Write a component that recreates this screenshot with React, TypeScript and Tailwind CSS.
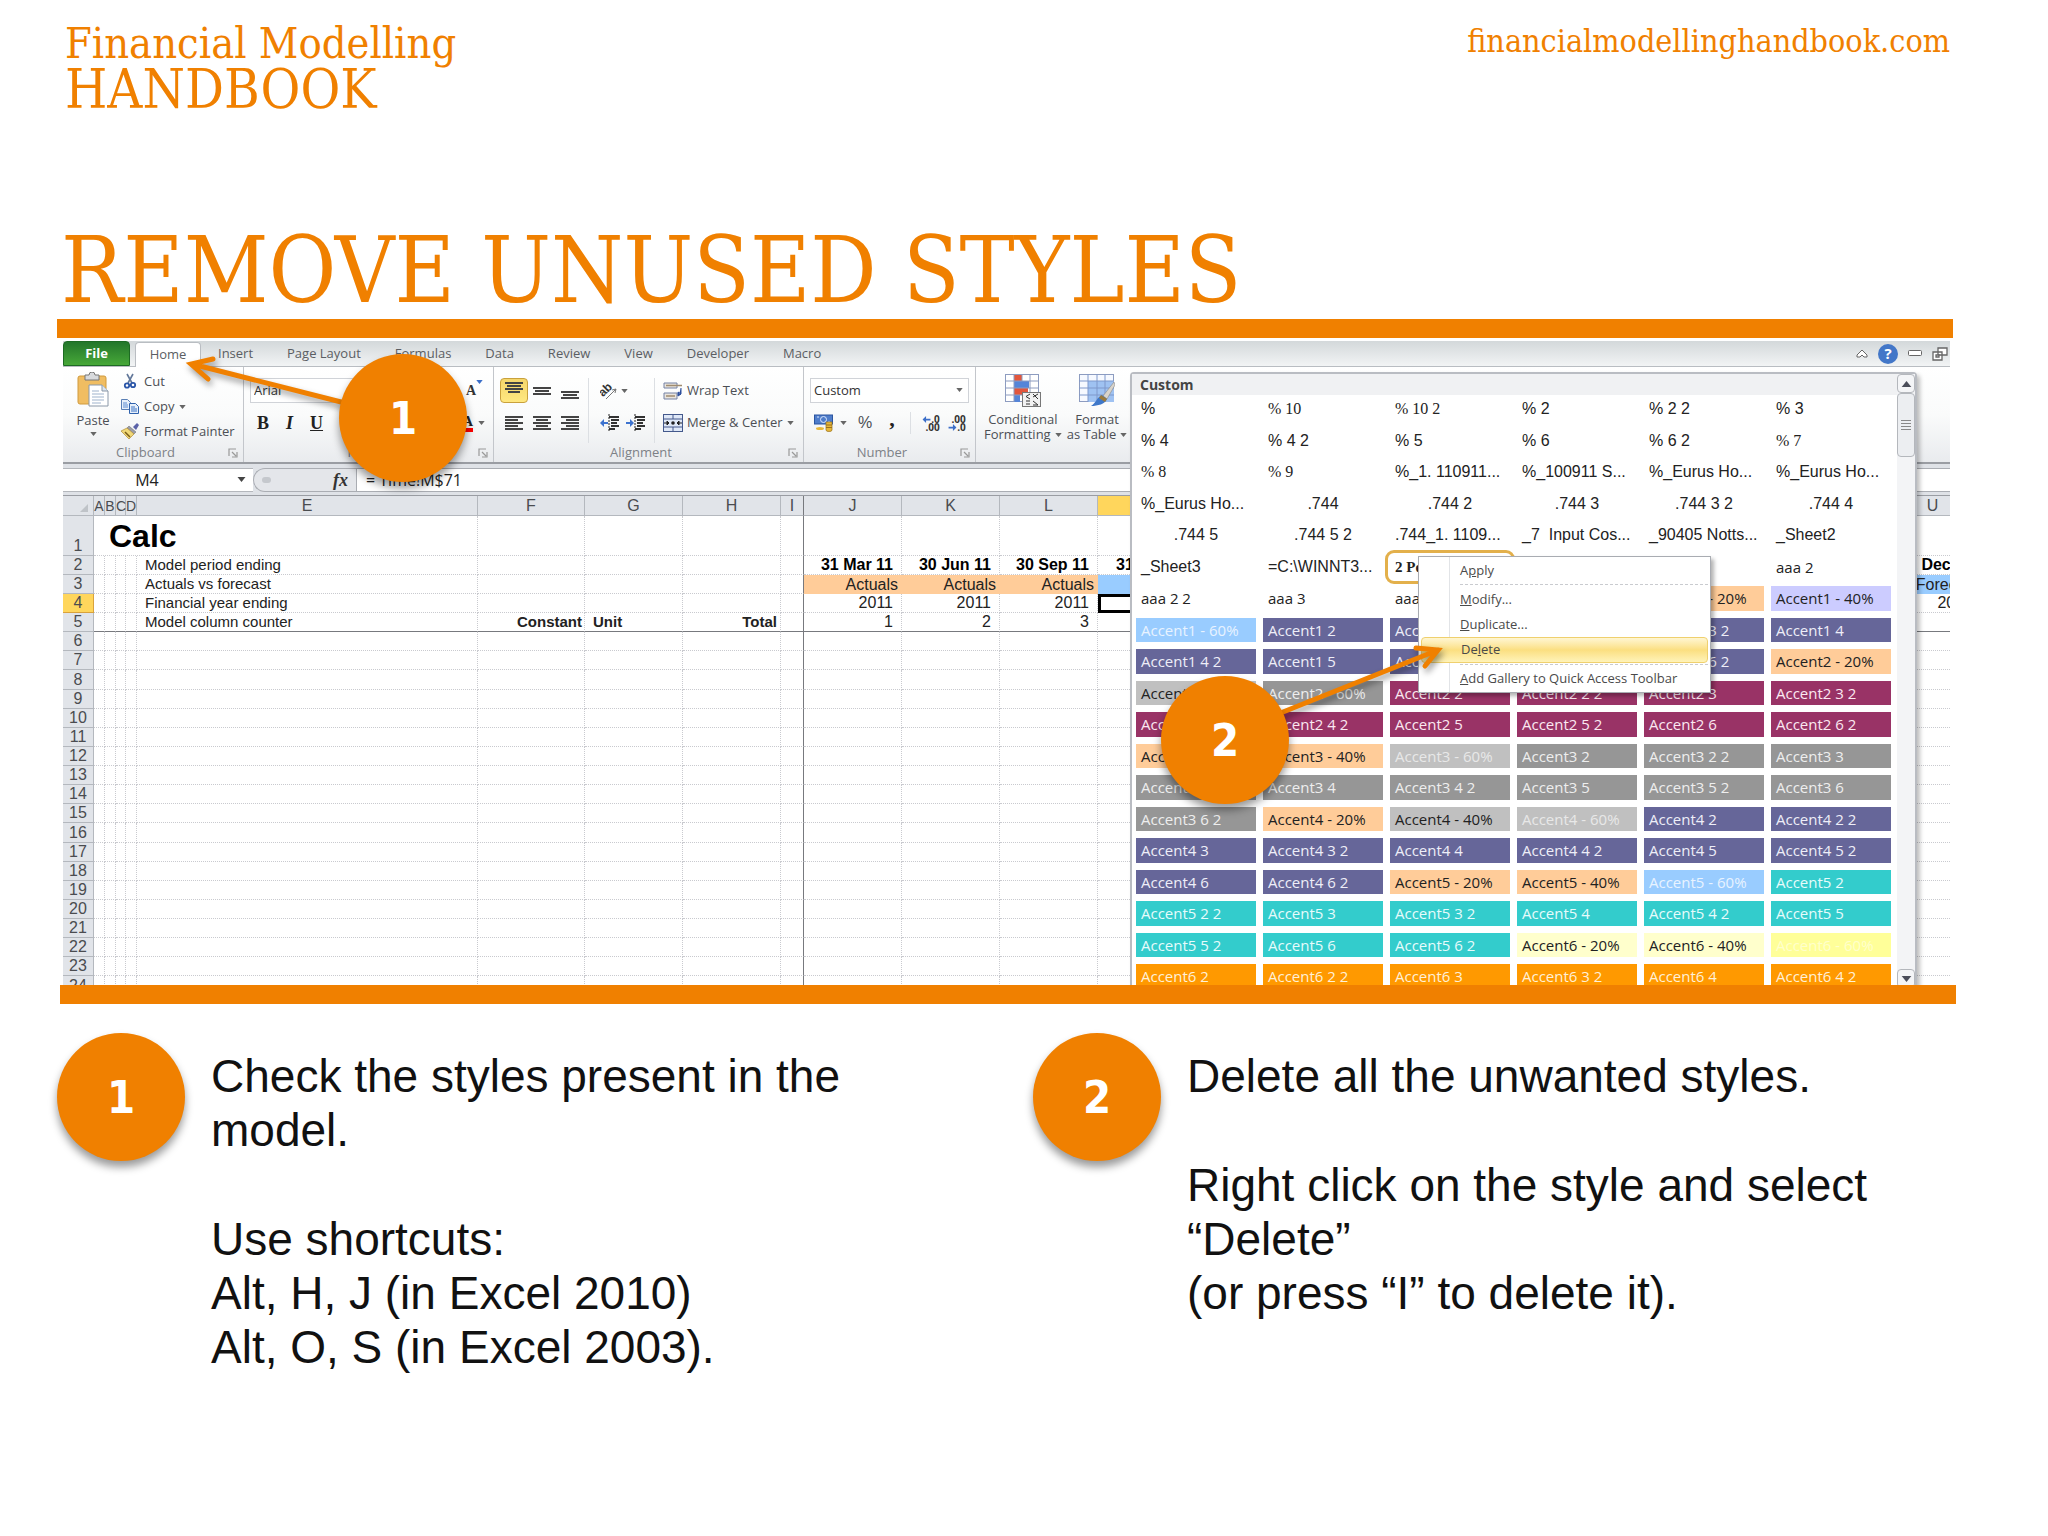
import type { ReactNode } from "react"
import clsx from "clsx"

const tabs = ["Insert", "Page Layout", "Formulas", "Data", "Review", "View", "Developer", "Macro"]

const quarterColumns = ["J", "K", "L", "M", "N", "O", "P", "Q", "R", "S", "T", "U"]

const periods: Record<string, { date: string; year?: string; counter?: string }> = {
  J: { date: "31 Mar 11", year: "2011", counter: "1" },
  K: { date: "30 Jun 11", year: "2011", counter: "2" },
  L: { date: "30 Sep 11", year: "2011", counter: "3" },
  M: { date: "31 Dec 11" },
  U: { date: "31 Dec 13", year: "2013" },
}

const rowLabels: Record<number, string> = {
  2: "Model period ending",
  3: "Actuals vs forecast",
  4: "Financial year ending",
  5: "Model column counter",
}

const tones = {
  sans: "font-['Liberation_Sans',Arial,sans-serif] text-[16px] text-[#222]",
  center: "font-['Liberation_Sans',Arial,sans-serif] text-[16px] text-[#222] justify-center",
  serif: "font-['Liberation_Serif',serif] text-[16px] text-[#222]",
  plain: "text-[#222]",
  picked: "font-['Liberation_Serif',serif] font-bold text-[#222] outline-3 outline-offset-2 outline-[#e3b04b] rounded-sm",
  sky: "bg-[#99ccff] text-[#e8f3ff]",
  indigo: "bg-[#666699] text-[#eeeef8]",
  lilac: "bg-[#ccccff] text-[#222]",
  peach: "bg-[#ffcc99] text-[#222]",
  silver: "bg-[#c0c0c0] text-[#222]",
  silverLight: "bg-[#c0c0c0] text-[#e8e8e8]",
  gray: "bg-[#969696] text-[#eee]",
  plum: "bg-[#993366] text-[#fbe8f1]",
  teal: "bg-[#33cccc] text-[#e6fbfb]",
  cream: "bg-[#ffffcc] text-[#222]",
  yellow: "bg-[#ffff99] text-[#ffffcc]",
  orange: "bg-[#ff9900] text-[#fff0d8]",
}

type Tone = keyof typeof tones

const gallery: [string, Tone][] = [
  ["%", "sans"], ["% 10", "serif"], ["% 10 2", "serif"], ["% 2", "sans"], ["% 2 2", "sans"], ["% 3", "sans"],
  ["% 4", "sans"], ["% 4 2", "sans"], ["% 5", "sans"], ["% 6", "sans"], ["% 6 2", "sans"], ["% 7", "serif"],
  ["% 8", "serif"], ["% 9", "serif"], ["%_1. 110911...", "sans"], ["%_100911 S...", "sans"], ["%_Eurus Ho...", "sans"], ["%_Eurus Ho...", "sans"],
  ["%_Eurus Ho...", "sans"], [".744", "center"], [".744 2", "center"], [".744 3", "center"], [".744 3 2", "center"], [".744 4", "center"],
  [".744 5", "center"], [".744 5 2", "center"], [".744_1. 1109...", "sans"], ["_7  Input Cos...", "sans"], ["_90405 Notts...", "sans"], ["_Sheet2", "sans"],
  ["_Sheet3", "sans"], ["=C:\\WINNT3...", "sans"], ["2 Pe", "picked"], ["", "plain"], ["", "plain"], ["aaa 2", "plain"],
  ["aaa 2 2", "plain"], ["aaa 3", "plain"], ["aaa", "plain"], ["", "plain"], ["Accent1 - 20%", "peach"], ["Accent1 - 40%", "lilac"],
  ["Accent1 - 60%", "sky"], ["Accent1 2", "indigo"], ["Accent1 2 2", "indigo"], ["Accent1 3", "indigo"], ["Accent1 3 2", "indigo"], ["Accent1 4", "indigo"],
  ["Accent1 4 2", "indigo"], ["Accent1 5", "indigo"], ["Accent1 5 2", "indigo"], ["Accent1 6", "indigo"], ["Accent1 6 2", "indigo"], ["Accent2 - 20%", "peach"],
  ["Accent2 - 40%", "silver"], ["Accent2 - 60%", "gray"], ["Accent2 2", "plum"], ["Accent2 2 2", "plum"], ["Accent2 3", "plum"], ["Accent2 3 2", "plum"],
  ["Accent2 4", "plum"], ["Accent2 4 2", "plum"], ["Accent2 5", "plum"], ["Accent2 5 2", "plum"], ["Accent2 6", "plum"], ["Accent2 6 2", "plum"],
  ["Accent3 - 20%", "peach"], ["Accent3 - 40%", "peach"], ["Accent3 - 60%", "silverLight"], ["Accent3 2", "gray"], ["Accent3 2 2", "gray"], ["Accent3 3", "gray"],
  ["Accent3 3 2", "gray"], ["Accent3 4", "gray"], ["Accent3 4 2", "gray"], ["Accent3 5", "gray"], ["Accent3 5 2", "gray"], ["Accent3 6", "gray"],
  ["Accent3 6 2", "gray"], ["Accent4 - 20%", "peach"], ["Accent4 - 40%", "silver"], ["Accent4 - 60%", "silverLight"], ["Accent4 2", "indigo"], ["Accent4 2 2", "indigo"],
  ["Accent4 3", "indigo"], ["Accent4 3 2", "indigo"], ["Accent4 4", "indigo"], ["Accent4 4 2", "indigo"], ["Accent4 5", "indigo"], ["Accent4 5 2", "indigo"],
  ["Accent4 6", "indigo"], ["Accent4 6 2", "indigo"], ["Accent5 - 20%", "peach"], ["Accent5 - 40%", "peach"], ["Accent5 - 60%", "sky"], ["Accent5 2", "teal"],
  ["Accent5 2 2", "teal"], ["Accent5 3", "teal"], ["Accent5 3 2", "teal"], ["Accent5 4", "teal"], ["Accent5 4 2", "teal"], ["Accent5 5", "teal"],
  ["Accent5 5 2", "teal"], ["Accent5 6", "teal"], ["Accent5 6 2", "teal"], ["Accent6 - 20%", "cream"], ["Accent6 - 40%", "cream"], ["Accent6 - 60%", "yellow"],
  ["Accent6 2", "orange"], ["Accent6 2 2", "orange"], ["Accent6 3", "orange"], ["Accent6 3 2", "orange"], ["Accent6 4", "orange"], ["Accent6 4 2", "orange"],
]

function Badge({ children, className }: { children: ReactNode; className?: string }) {
  return (
    <div
      className={clsx(
        "flex size-32 shrink-0 items-center justify-center rounded-full bg-[#f08000] font-['DejaVu_Sans_Condensed','DejaVu_Sans',sans-serif] text-[45px] leading-none font-bold text-white shadow-[0_6px_8px_rgba(0,0,0,0.4)]",
        className,
      )}
    >
      {children}
    </div>
  )
}

function Caret({ className = "h-[4px] w-[7px] fill-[#666]" }: { className?: string }) {
  return (
    <svg viewBox="0 0 8 5" className={clsx("shrink-0", className)}>
      <path d="M0 0h8L4 5z" />
    </svg>
  )
}

/* Stack of ruled lines; each entry is [x, width] */
function Lines({ rows, top = 2 }: { rows: [number, number][]; top?: number }) {
  return (
    <svg viewBox="0 0 18 18" className="size-[18px] shrink-0">
      {rows.map(([x, w], i) => (
        <rect key={i} x={x} y={top + i * 3} width={w} height="2" fill="#444" />
      ))}
    </svg>
  )
}

function Launcher() {
  return (
    <svg viewBox="0 0 10 10" className="size-[10px] fill-none stroke-[#999]">
      <path d="M1 8V1h7M4 4l4 4M9 4v5H4" strokeWidth="1.2" />
    </svg>
  )
}

function Group({ label, className, children }: { label: string; className?: string; children: ReactNode }) {
  return (
    <section className={clsx("flex shrink-0 flex-col border-r border-[#c3c6cb]", className)}>
      <div className="min-h-0 flex-1">{children}</div>
      <footer className="flex h-[18px] items-center pr-[5px] text-[#7d8187]">
        <span className="flex-1 text-center">{label}</span>
        <Launcher />
      </footer>
    </section>
  )
}

function PasteIcon() {
  return (
    <svg viewBox="0 0 32 36" className="h-[36px] w-[32px]">
      <rect x="1" y="4" width="28" height="28" rx="2" fill="#f0bd62" stroke="#d09a3c" />
      <path d="M8 3h4a3 3 0 0 1 6 0h4v5H8z" fill="#d8dadd" stroke="#777" />
      <path d="M12 13h13l6 6v15H12z" fill="#fff" stroke="#8b98a8" />
      <path d="M25 13v6h6" fill="#dde6f0" stroke="#8b98a8" />
      <path d="M15 19h7M15 22h12M15 25h12M15 28h12M15 31h9" stroke="#9fb3cc" />
    </svg>
  )
}

function CutIcon() {
  return (
    <svg viewBox="0 0 18 16" className="h-[16px] w-[18px]" fill="none">
      <path d="M6 1l5 9M12 1L7 10" stroke="#63789a" strokeWidth="1.6" />
      <circle cx="6" cy="12.5" r="2.2" stroke="#2a55a8" strokeWidth="1.8" />
      <circle cx="12" cy="12" r="2.2" stroke="#2a55a8" strokeWidth="1.8" />
    </svg>
  )
}

function CopyIcon() {
  return (
    <svg viewBox="0 0 18 16" className="h-[16px] w-[18px]">
      <path d="M.5 1.5h6l3 3v7h-9z" fill="#e6effa" stroke="#5a7fb5" />
      <path d="M2 5h4M2 7h5M2 9h5" stroke="#5a8ad0" />
      <path d="M8.5 5.5h6l3 3v7h-9z" fill="#e6effa" stroke="#2f62ad" />
      <path d="M10 9h4M10 11h6M10 13h6" stroke="#3b73c4" />
    </svg>
  )
}

function PainterIcon() {
  return (
    <svg viewBox="0 0 18 16" className="h-[16px] w-[18px]">
      <path d="M12 4l4-4 2 2-3 5z" fill="#5b62a8" />
      <path d="M8 3l7 6-2 2-7-6z" fill="#9a9ca8" stroke="#666" strokeWidth=".5" />
      <path d="M6 5l7 6-5 5-8-8z" fill="#f0d878" stroke="#b08a35" strokeWidth=".7" />
      <path d="M4 9l5 5" stroke="#7a5c18" strokeWidth="1.5" />
    </svg>
  )
}

function OrientationIcon() {
  return (
    <svg viewBox="0 0 18 18" className="size-[18px]">
      <g transform="rotate(-45 8 9)">
        <text x="0" y="10" fontSize="12" fontWeight="bold" fontFamily="Liberation Sans" fill="#333">ab</text>
      </g>
      <path d="M6 17L16 7M16 7l-4 1M16 7l-1 4" stroke="#777" fill="none" />
    </svg>
  )
}

function IndentIcon() {
  return (
    <svg viewBox="0 0 20 18" className="h-[18px] w-[20px]">
      <path d="M9 3h10M11 6h8M11 9h6M11 12h8M9 15h6" stroke="#333" strokeWidth="2" />
      <path d="M9 0v18" stroke="#222" strokeDasharray="2 1" />
      <path d="M0 9l4-4v3h4v2H4v3z" fill="#3d73cf" />
    </svg>
  )
}

function OutdentIcon() {
  return (
    <svg viewBox="0 0 20 18" className="h-[18px] w-[20px]">
      <path d="M9 3h10M11 6h8M11 9h6M11 12h8M9 15h6" stroke="#333" strokeWidth="2" />
      <path d="M9 0v18" stroke="#222" strokeDasharray="2 1" />
      <path d="M8 9L4 5v3H0v2h4v3z" fill="#3d73cf" />
    </svg>
  )
}

function WrapIcon() {
  return (
    <svg viewBox="0 0 20 18" className="h-[18px] w-[20px]">
      <path d="M1 1h13v5H1zM1 11h13v6H1z" fill="#e9e4dc" stroke="#7582a5" />
      <path d="M3 3.5h16M3 14h9" stroke="#a08c70" strokeWidth="1.5" />
      <path d="M18 6v6h-2M18 12l-3-2v4z" stroke="#2d4f9c" fill="#2d4f9c" />
    </svg>
  )
}

function MergeIcon() {
  return (
    <svg viewBox="0 0 20 18" className="h-[18px] w-[20px]">
      <rect x=".5" y=".5" width="19" height="17" fill="#dfe8f7" stroke="#44598c" />
      <path d="M0 5h20M0 13h20M10 0v5M10 13v5" stroke="#44598c" />
      <path d="M1 9h5M19 9h-5M4 7v4l2-2zM16 7v4l-2-2z" stroke="#222" fill="#222" />
      <circle cx="10" cy="9" r="1.8" fill="#222" />
    </svg>
  )
}

function CurrencyIcon() {
  return (
    <svg viewBox="0 0 20 18" className="h-[18px] w-[20px]">
      <rect x=".5" y="1" width="18" height="9" fill="#4f7dca" stroke="#2b559f" />
      <circle cx="9.5" cy="5.5" r="3" fill="none" stroke="#dbe8ff" />
      <path d="M3 3h2M14 8h2" stroke="#dbe8ff" />
      <path d="M12 8h6v8a3 1.5 0 0 1-6 0z" fill="#e8b83a" stroke="#9a701a" strokeWidth=".7" />
      <path d="M12 11h6M12 13.5h6" stroke="#9a701a" />
      <ellipse cx="6" cy="14.5" rx="4" ry="1.5" fill="#e8b83a" />
    </svg>
  )
}

function DecimalIcon({ more }: { more?: boolean }) {
  return (
    <span className="flex w-[20px] flex-col items-end text-[10px] leading-[8px] font-bold text-[#333]">
      <span className="flex items-center">
        {more && <svg viewBox="0 0 9 8" className="h-[7px] w-[9px] fill-[#3c6fc9]"><path d="M0 4l4-4v3h5v2H4v3z" /></svg>}
        {more ? ".0" : ".00"}
      </span>
      <span className="flex items-center">
        {!more && <svg viewBox="0 0 9 8" className="h-[7px] w-[9px] fill-[#3c6fc9]"><path d="M9 4L5 0v3H0v2h5v3z" /></svg>}
        {more ? ".00" : ".0"}
      </span>
    </span>
  )
}

function ConditionalIcon() {
  return (
    <svg viewBox="0 0 36 33" className="h-[33px] w-[36px]">
      <rect x=".5" y=".5" width="33" height="27" fill="#fff" stroke="#8d9cc0" />
      <path d="M9 1h8v6H9zM9 14h14v7H9z" fill="#e2563c" />
      <path d="M9 7h15v7H9zM9 21h6v7H9z" fill="#5585d8" />
      <path d="M0 7h34M0 14h34M0 21h34M9 0v28M17 0v7M25 0v28" stroke="#8d9cc0" />
      <rect x="17.5" y="18.5" width="18" height="14" fill="#f2f2f2" stroke="#777" />
      <path d="M25 20l-4 2.500 4 2.500M21 27h4M21 30h4M28 20l5 5M33 20l-5 3M28 27l5 4M28 31h5" stroke="#333" fill="none" />
    </svg>
  )
}

function TableIcon() {
  return (
    <svg viewBox="0 0 36 33" className="h-[33px] w-[36px]">
      <rect x=".5" y=".5" width="34" height="27" fill="#f6f9ff" stroke="#8d9cc0" />
      <path d="M9 7h26v21H9z" fill="#9fc2f2" />
      <path d="M0 7h35M0 14h35M0 21h35M9 0v28M18 0v28M26 0v28" stroke="#7e98cb" />
      <path d="M35 8L24 22l4 3 8-14z" fill="#d9d4cb" stroke="#888" strokeWidth=".6" />
      <path d="M23 21l5 4c-2 5-9 7-16 7 5-3 6-9 11-11z" fill="#3f78c9" />
      <path d="M22 21l6 4-2 3-6-4z" fill="#9b7a3a" />
    </svg>
  )
}

function TabRow() {
  return (
    <nav className="flex h-[26px] items-end border-b border-[#b9bdc2] bg-linear-to-b from-[#d3d8da] to-[#f2f4f5] text-[#5b5e63]">
      <button className="h-full w-[67px] rounded-t-sm border border-[#1d6b23] bg-linear-to-b from-[#23762b] to-[#47a838] font-bold text-white">File</button>
      <button className="-mb-px ml-[5px] h-full w-[66px] rounded-t-sm border border-b-0 border-[#b9bdc2] bg-white">Home</button>
      <div className="flex h-full items-center">
        {tabs.map((tab) => (
          <button key={tab} className="px-[17px]">{tab}</button>
        ))}
      </div>
      <div className="ml-auto flex h-full items-center gap-[10px] pr-[2px]">
        <svg viewBox="0 0 12 10" className="h-[10px] w-[12px]" fill="#fff" stroke="#666">
          <path d="M1 6l5-5 5 5v2H8L6 6 4 8H1z" />
        </svg>
        <span className="flex size-[20px] items-center justify-center rounded-full bg-[#4377c8] text-[15px] font-bold text-white">?</span>
        <svg viewBox="0 0 14 7" className="h-[7px] w-[14px]" fill="#fff" stroke="#666">
          <rect x=".5" y=".5" width="13" height="5" rx="1" />
        </svg>
        <svg viewBox="0 0 16 14" className="h-[14px] w-[16px]" fill="#fff" stroke="#666" strokeWidth="1.3">
          <path d="M6 1h9v7H6zM1 5h9v8H1z" />
          <path d="M4 8h3v2H4z" />
        </svg>
      </div>
    </nav>
  )
}

function Ribbon() {
  return (
    <div className="flex h-[97px] border-b-2 border-[#9a9da3] bg-linear-to-b from-white via-[#fafbfb] to-[#e9ebee] text-[#4c4f55]">
      <Group label="Clipboard" className="w-[181px]">
        <div className="flex pt-[5px] pl-[12px]">
          <button className="flex w-[36px] flex-col items-center">
            <PasteIcon />
            <span className="leading-[24px]">Paste</span>
            <Caret />
          </button>
          <div className="flex flex-col pl-[10px]">
            {[
              { icon: <CutIcon />, label: "Cut" },
              { icon: <CopyIcon />, label: "Copy", caret: true },
              { icon: <PainterIcon />, label: "Format Painter" },
            ].map((item) => (
              <button key={item.label} className="flex h-[25px] items-start gap-[5px] whitespace-nowrap">
                <span className="pt-px">{item.icon}</span>
                {item.label}
                {item.caret && <Caret className="mt-[8px] h-[4px] w-[7px] fill-[#666]" />}
              </button>
            ))}
          </div>
        </div>
      </Group>

      <Group label="Font" className="w-[250px]">
        <div className="flex items-center pt-[11px] pl-[6px]">
          <select aria-label="Font" className="h-[25px] w-[160px] appearance-none border border-[#d0d3d8] bg-white px-[3px] text-[#333]">
            <option>Arial</option>
          </select>
          <button className="ml-auto flex items-start pr-[10px] font-['Liberation_Serif',serif] text-[14px] font-bold text-[#333]">
            A<Caret className="h-[4px] w-[7px] fill-[#3c6fc9]" />
          </button>
        </div>
        <div className="flex h-[40px] items-center gap-[17px] pl-[13px] font-['Liberation_Serif',serif] text-[18px] text-[#222]">
          <button className="font-bold">B</button>
          <button className="font-bold italic">I</button>
          <button className="font-bold underline">U</button>
          <Caret />
          <button className="ml-auto flex items-center gap-[5px] pr-[8px]">
            <span className="border-b-4 border-[#f00] text-[15px] leading-[14px] font-bold">A</span>
            <Caret />
          </button>
        </div>
      </Group>

      <Group label="Alignment" className="w-[310px]">
        <div className="flex pt-[11px] pl-[6px]">
          <div className="flex flex-col">
            <div className="flex h-[25px] items-center">
              <button aria-label="Top align" className="flex h-[25px] w-[28px] justify-center rounded-sm border border-[#c9a13c] bg-linear-to-b from-[#f5d66b] to-[#ffe880]">
                <Lines rows={[[0, 18], [2, 14], [0, 18], [3, 12]]} top={3} />
              </button>
              <button aria-label="Middle align" className="flex w-[28px] justify-center"><Lines rows={[[0, 18], [2, 14], [0, 18]]} top={5} /></button>
              <button aria-label="Bottom align" className="flex w-[28px] justify-center"><Lines rows={[[0, 18], [2, 14], [0, 18]]} top={9} /></button>
            </div>
            <div className="flex h-[40px] items-center">
              <button aria-label="Align left" className="flex w-[28px] justify-center"><Lines rows={[[0, 18], [0, 13], [0, 18], [0, 13], [0, 18]]} /></button>
              <button aria-label="Center" className="flex w-[28px] justify-center"><Lines rows={[[0, 18], [3, 12], [0, 18], [3, 12], [0, 18]]} /></button>
              <button aria-label="Align right" className="flex w-[28px] justify-center"><Lines rows={[[0, 18], [5, 13], [0, 18], [5, 13], [0, 18]]} /></button>
            </div>
          </div>
          <div className="ml-[4px] flex flex-col border-l border-[#dcdfe3] pl-[11px]">
            <button aria-label="Orientation" className="flex h-[25px] items-center gap-[3px]"><OrientationIcon /><Caret /></button>
            <div className="flex h-[40px] items-center gap-[6px]">
              <IndentIcon />
              <OutdentIcon />
            </div>
          </div>
          <div className="ml-[8px] flex flex-col border-l border-[#dcdfe3] pl-[8px]">
            <button className="flex h-[25px] items-center gap-[4px]"><WrapIcon />Wrap Text</button>
            <button className="flex h-[40px] items-center gap-[4px] whitespace-nowrap"><MergeIcon />Merge &amp; Center<Caret /></button>
          </div>
        </div>
      </Group>

      <Group label="Number" className="w-[172px]">
        <div className="flex items-center px-[6px] pt-[11px]">
          <div className="relative flex-1">
            <select aria-label="Number format" className="h-[25px] w-full appearance-none border border-[#d0d3d8] bg-white px-[3px] text-[#333]">
              <option>Custom</option>
            </select>
            <Caret className="absolute top-[10px] right-[6px] h-[4px] w-[7px] fill-[#666]" />
          </div>
        </div>
        <div className="flex h-[40px] items-center pl-[10px]">
          <CurrencyIcon />
          <Caret className="ml-[6px] h-[4px] w-[7px] fill-[#666]" />
          <button className="ml-[11px] font-['Liberation_Sans',sans-serif] text-[16px]">%</button>
          <button className="ml-[17px] pb-[8px] font-['Liberation_Serif',serif] text-[22px] leading-[10px] font-bold text-[#222]">,</button>
          <div className="ml-[15px] flex h-[22px] items-center gap-[6px] border-l border-[#dcdfe3] pl-[9px]">
            <DecimalIcon more />
            <DecimalIcon />
          </div>
        </div>
      </Group>

      <div className="flex gap-[5px] pt-[7px] pl-[8px]">
        <button className="flex flex-col items-center leading-[15px]">
          <ConditionalIcon />
          <span className="mt-[5px]">Conditional</span>
          <span className="flex items-center gap-[4px]">Formatting<Caret /></span>
        </button>
        <button className="flex flex-col items-center leading-[15px]">
          <TableIcon />
          <span className="mt-[5px]">Format</span>
          <span className="flex items-center gap-[4px] whitespace-nowrap">as Table<Caret /></span>
        </button>
      </div>
    </div>
  )
}

function FormulaBar() {
  return (
    <div className="flex h-[32px] items-center border-b border-[#9a9da3] bg-[#dfe2e7] font-['Open_Sans',sans-serif] text-[16px] text-[#222]">
      <div className="flex h-[24px] w-[190px] items-center border-y border-[#b4b7bc] bg-white">
        <span className="flex-1 pr-[6px] text-center">M4</span>
        <Caret className="mr-[7px] h-[5px] w-[9px] fill-[#444]" />
      </div>
      <div className="flex h-[24px] w-[103px] items-center justify-between rounded-l-full border border-r-0 border-[#aaadb3] bg-[#e4e6ea] px-[8px]">
        <span className="h-[6px] w-[9px] rounded-full bg-[#c5c8cd]" />
        <span className="font-['Liberation_Serif',serif] text-[18px] leading-none font-bold text-[#333] italic">fx</span>
      </div>
      <input
        aria-label="Formula"
        defaultValue="= Time!M$71"
        className="h-[24px] min-w-0 flex-1 border border-r-0 border-[#aaadb3] bg-white pl-[9px] outline-none"
      />
    </div>
  )
}

const cell = "border-r border-b border-dotted border-[#c9cacf] p-0 overflow-hidden whitespace-nowrap"
const head = "border-r border-b border-[#b4b8be] bg-[#e1e4e9] p-0 text-center font-normal text-[#4a4c50]"
const freeze = "border-r-[#77797e] [border-right-style:solid]"

function Sheet() {
  const rows = Array.from({ length: 23 }, (_, i) => i + 2)

  return (
    <table className="w-[1919px] table-fixed border-separate border-spacing-0 bg-white font-['Liberation_Sans',Arial,sans-serif] text-[15px] leading-[18px] text-[#222]">
      <colgroup>
        <col className="w-[31px]" />
        <col className="w-[11px]" />
        <col className="w-[11px]" />
        <col className="w-[10px]" />
        <col className="w-[11px]" />
        <col className="w-[341px]" />
        <col className="w-[107px]" />
        <col className="w-[98px]" />
        <col className="w-[98px]" />
        <col className="w-[23px]" />
        {quarterColumns.map((c) => (
          <col key={c} className={c === "M" ? "w-[100px]" : "w-[98px]"} />
        ))}
      </colgroup>
      <thead>
        <tr className="h-[20px]">
          <th className={head}>
            <svg viewBox="0 0 10 10" className="mt-[4px] ml-[17px] size-[8px] fill-[#bfc3c8]"><path d="M10 0v10H0z" /></svg>
          </th>
          {["A", "B", "C", "D"].map((c) => (
            <th key={c} className={clsx(head, "text-[14px]")}>{c}</th>
          ))}
          {["E", "F", "G", "H"].map((c) => (
            <th key={c} className={clsx(head, "text-[16px]")}>{c}</th>
          ))}
          <th className={clsx(head, freeze, "text-[16px]")}>I</th>
          {quarterColumns.map((c) => (
            <th key={c} className={clsx(head, "text-[16px]", c === "M" && "bg-[#ffd65c]")}>{(c < "M" || c === "U") && c}</th>
          ))}
        </tr>
      </thead>
      <tbody>
        <tr className="h-[40px]">
          <th className={clsx(head, "align-bottom text-[16px]")}>1</th>
          <td colSpan={5} className={clsx(cell, "pl-[15px] text-[32px] leading-[38px] font-bold text-black")}>Calc</td>
          <td className={cell} />
          <td className={cell} />
          <td className={cell} />
          <td className={clsx(cell, freeze)} />
          {quarterColumns.map((c) => (
            <td key={c} className={cell} />
          ))}
        </tr>
        {rows.map((row) => {
          const rule = row === 5 ? "border-b-[#77797e] [border-bottom-style:solid]" : ""
          return (
            <tr key={row} className={row % 8 === 0 ? "h-[20px]" : "h-[19px]"}>
              <th className={clsx(head, "text-[16px]", row === 4 && "border-[#d9a23c] bg-[#ffd65c]")}>{row}</th>
              <td className={clsx(cell, rule)} />
              <td className={clsx(cell, rule)} />
              <td className={clsx(cell, rule)} />
              <td className={clsx(cell, rule)} />
              <td className={clsx(cell, rule, "pl-[8px]")}>{rowLabels[row]}</td>
              <td className={clsx(cell, rule, "pr-[2px] text-right font-bold")}>{row === 5 && "Constant"}</td>
              <td className={clsx(cell, rule, "pl-[8px] font-bold")}>{row === 5 && "Unit"}</td>
              <td className={clsx(cell, rule, "pr-[3px] text-right font-bold")}>{row === 5 && "Total"}</td>
              <td className={clsx(cell, rule, freeze)} />
              {quarterColumns.map((c) => {
                const period = periods[c]
                const actual = c < "M"
                if (row === 2) return <td key={c} className={clsx(cell, "pr-[8px] text-right text-[16px] font-bold text-black")}>{period?.date}</td>
                if (row === 3)
                  return (
                    <td key={c} className={clsx("overflow-hidden p-0 pr-[4px] text-right text-[16px]", actual ? "bg-[#ffcc99]" : "bg-[#99ccff]")}>
                      {actual ? "Actuals" : c === "U" && "Forecast"}
                    </td>
                  )
                if (row === 4 && c === "M") return <td key={c} className="border-3 border-black p-0" />
                return (
                  <td key={c} className={clsx(cell, rule, "pr-[8px] text-right text-[16px]")}>
                    {row === 4 && period?.year}
                    {row === 5 && period?.counter}
                  </td>
                )
              })}
            </tr>
          )
        })}
      </tbody>
    </table>
  )
}

function StyleGallery() {
  return (
    <div className="absolute top-[31px] left-[1067px] flex w-[787px] rounded-t-sm border-2 border-[#b9bcc2] bg-white font-['Open_Sans','Noto_Sans',sans-serif] text-[15px] shadow-[3px_3px_4px_rgba(0,0,0,0.25)]">
      <div className="flex-1">
        <h2 className="h-[21px] bg-[#f0f1f3] pl-[8px] text-[14px] leading-[21px] font-bold text-[#444]">Custom</h2>
        <div className="mt-[2px] ml-[4px] grid h-[592px] w-[755px] grid-cols-6 grid-rows-[repeat(19,minmax(0,1fr))] gap-[7px]">
          {gallery.map(([name, tone], i) => (
            <button key={i} className={clsx("flex items-center overflow-hidden px-[5px] whitespace-pre", tones[tone])}>
              {name}
            </button>
          ))}
        </div>
      </div>
      <div className="flex w-[18px] flex-col bg-[#f3f4f6]">
        <button aria-label="Scroll up" className="flex h-[19px] items-center justify-center rounded-sm border border-[#b4b7bc] bg-[#f4f5f7]">
          <Caret className="h-[6px] w-[11px] rotate-180 fill-[#4b4e5a]" />
        </button>
        <div className="flex h-[64px] flex-col items-center justify-center gap-[2px] rounded-sm border border-[#b4b7bc] bg-[#eceef1]">
          <span className="h-px w-[10px] bg-[#888]" />
          <span className="h-px w-[10px] bg-[#888]" />
          <span className="h-px w-[10px] bg-[#888]" />
          <span className="h-px w-[10px] bg-[#888]" />
        </div>
        <button aria-label="Scroll down" className="mt-auto mb-px flex h-[19px] items-center justify-center rounded-sm border border-[#b4b7bc] bg-[#f4f5f7]">
          <Caret className="h-[6px] w-[11px] fill-[#4b4e5a]" />
        </button>
      </div>
    </div>
  )
}

function ContextMenu() {
  return (
    <div className="absolute top-[215px] left-[1355px] flex w-[293px] border border-[#a9acb2] bg-white text-[#4a4a4a] shadow-[3px_3px_4px_rgba(0,0,0,0.3)]">
      <div className="flex flex-1 flex-col bg-[linear-gradient(to_right,transparent_30px,#e2e4e7_30px,#e2e4e7_31px,transparent_31px)] px-[2px] *:pl-[39px] *:text-left">
        <button className="h-[27px]">A<u>p</u>ply</button>
        <hr className="ml-[39px] border-dashed border-[#c9cbcf]" />
        <button className="mt-[3px] h-[24px]"><u>M</u>odify...</button>
        <button className="h-[25px]"><u>D</u>uplicate...</button>
        <button className="h-[26px] rounded-sm border border-[#efd06e] bg-linear-to-b from-[#fff6d2] via-[#fbdf80] to-[#fff3b8]">De<u>l</u>ete</button>
        <hr className="mt-px ml-[39px] border-dashed border-[#c9cbcf]" />
        <button className="h-[27px] whitespace-nowrap"><u>A</u>dd Gallery to Quick Access Toolbar</button>
      </div>
    </div>
  )
}

function Arrows() {
  return (
    <svg
      viewBox="0 0 1887 644"
      className="pointer-events-none absolute top-0 left-0 h-[644px] w-[1887px] fill-none stroke-[#f08000] stroke-[5] drop-shadow-[2px_4px_3px_rgba(0,0,0,0.4)]"
      strokeLinecap="round"
    >
      <path d="M282 62L129 23M150 18L128 23L145 38" />
      <path d="M1215 373L1375 309M1353 307L1375 309L1362 325" />
    </svg>
  )
}

export default function App() {
  return (
    <div className="min-h-screen bg-white pb-20 font-['Liberation_Sans',Arial,sans-serif]">
      <header className="flex items-start justify-between pt-[17px] pr-[98px] pl-[65px] font-['DejaVu_Serif_Condensed','DejaVu_Serif',serif] text-[#f08000]">
        <div>
          <p className="text-[43px] leading-[52px]">Financial Modelling</p>
          <p className="text-[54px] leading-[42px]">HANDBOOK</p>
        </div>
        <a href="https://financialmodellinghandbook.com" className="text-[32px] leading-[48px]">financialmodellinghandbook.com</a>
      </header>

      <main className="pt-[112px] pr-[95px] pl-[57px]">
        <h1 className="pl-[4px] font-['DejaVu_Serif_Condensed','DejaVu_Serif',serif] text-[92px] leading-[96px] text-[#f08000]">
          REMOVE UNUSED STYLES
        </h1>
        <div className="h-[19px] bg-[#f08000]" />

        <div className="relative mt-[3px] mr-[3px] ml-[6px] h-[644px]">
          <div className="relative h-full overflow-hidden font-['Open_Sans','Noto_Sans',sans-serif] text-[13px]">
            <TabRow />
            <Ribbon />
            <FormulaBar />
            <Sheet />
            <StyleGallery />
            <ContextMenu />
          </div>
          <Arrows />
          <Badge className="absolute top-[13px] left-[276px]">1</Badge>
          <Badge className="absolute top-[335px] left-[1098px]">2</Badge>
        </div>
        <div className="-mr-[3px] ml-[3px] h-[19px] bg-[#f08000]" />
      </main>

      <section className="grid grid-cols-2 pt-[29px] pr-[39px] pl-[57px] text-[46px] leading-[54px] text-[#111]">
        <div className="flex gap-[26px]">
          <Badge>1</Badge>
          <div className="max-w-[700px] pt-4">
            <p>Check the styles present in the model.</p>
            <p className="mt-[55px]">Use shortcuts:</p>
            <p>Alt, H, J (in Excel 2010)</p>
            <p>Alt, O, S (in Excel 2003).</p>
          </div>
        </div>
        <div className="flex gap-[26px]">
          <Badge>2</Badge>
          <div className="max-w-[700px] pt-4">
            <p>Delete all the unwanted styles.</p>
            <p className="mt-[55px]">Right click on the style and select “Delete”</p>
            <p>(or press “I” to delete it).</p>
          </div>
        </div>
      </section>
    </div>
  )
}
